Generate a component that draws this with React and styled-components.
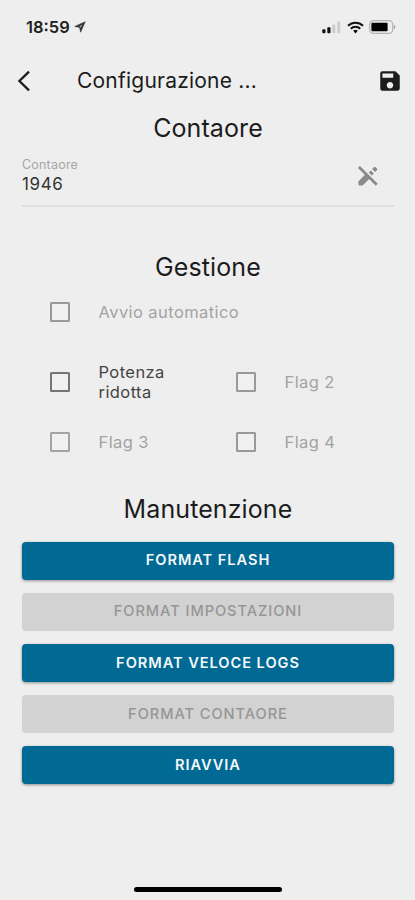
import React, { useState } from 'react'
import styled, { createGlobalStyle } from 'styled-components'
import { MdSave } from 'react-icons/md'

const actions = [
    { label: "FORMAT FLASH", enabled: true },
    { label: "FORMAT IMPOSTAZIONI", enabled: false },
    { label: "FORMAT VELOCE LOGS", enabled: true },
    { label: "FORMAT CONTAORE", enabled: false },
    { label: "RIAVVIA", enabled: true },
];

function StatusBar() {
    return (
        <StatusContainer>
            <Clock>18:59</Clock>
            <svg width="12" height="12" viewBox="0 0 12 12">
                <path d="M11.2 0.8 L0.8 5.4 L5.6 6.4 L6.6 11.2 Z" fill="#333" stroke="#333" strokeWidth="0.6" strokeLinejoin="round" />
                <path d="M5.4 5.4 L8.6 3.4 L6.6 6.6 Z" fill="#bbb" />
            </svg>
            <StatusIcons>
                <svg width="19" height="13" viewBox="0 0 19 13">
                    <rect x="0.3" y="8.2" width="3.2" height="4" rx="1" fill="#111" />
                    <rect x="5.3" y="6.2" width="3.2" height="6" rx="1" fill="#111" />
                    <rect x="10.3" y="3.4" width="3" height="8.8" rx="1" fill="#ccc" />
                    <rect x="15.2" y="0.6" width="3" height="11.6" rx="1" fill="#ccc" />
                </svg>
                <svg width="17" height="13" viewBox="0 0 17 13" fill="none" stroke="#111" strokeWidth="2.1">
                    <path d="M1 4.8 A10.6 10.6 0 0 1 16 4.8" />
                    <path d="M3.8 7.7 A6.7 6.7 0 0 1 13.2 7.7" />
                    <path d="M6.2 9.8 A3.4 3.4 0 0 1 10.8 9.8 L8.5 12.4 Z" fill="#111" stroke="none" />
                </svg>
                <svg width="27" height="14" viewBox="0 0 27 14">
                    <rect x="0.7" y="0.7" width="23" height="12.6" rx="3.8" fill="none" stroke="#b4b4b4" strokeWidth="1.3" />
                    <rect x="2.4" y="2.8" width="16.2" height="8.4" rx="1" fill="#000" />
                    <path d="M25 4.8 A2.6 2.6 0 0 1 25 9.2 Z" fill="#999" />
                </svg>
            </StatusIcons>
        </StatusContainer>
    )
};

function CheckItem({ label, disabled, faded }) {
    const [checked, setChecked] = useState(false);

    return (
        <CheckLabel $disabled={disabled}>
            <CheckBox
                type="checkbox"
                checked={checked}
                disabled={disabled}
                $faded={faded}
                onChange={() => setChecked(!checked)}
            />
            <span>{label}</span>
        </CheckLabel>
    )
};

function App() {
    return (
        <>
        <GlobalStyle />
        <Screen>
            <StatusBar />

            <Header>
                <IconButton aria-label="Indietro">
                    <svg width="14" height="22" viewBox="0 0 14 22">
                        <path d="M12 1.6 L2.4 11 L12 20.4" fill="none" stroke="#1c1c1c" strokeWidth="2.3" />
                    </svg>
                </IconButton>
                <Title>Configurazione ...</Title>
                <IconButton aria-label="Salva">
                    <MdSave size={26} color="#1c1c1c" />
                </IconButton>
            </Header>

            <SectionTitle>Contaore</SectionTitle>
            <Field>
                <div>
                    <FieldLabel>Contaore</FieldLabel>
                    <FieldValue>1946</FieldValue>
                </div>
                <svg width="20" height="20" viewBox="0 0 20 20" fill="#8a8a8a">
                    <path d="M0.4 15.6 L8 7.4 L12.4 11.8 L4.6 19.6 H2 Q0.4 19.6 0.4 18 Z" />
                    <path d="M10.8 6.4 L12.8 4.4 L15.8 7.4 L13.8 9.4 Z" />
                    <path d="M14.1 3.1 L15.9 1.3 Q16.8 0.4 17.7 1.3 L18.9 2.5 Q19.8 3.4 18.9 4.3 L17.1 6.1 Z" />
                    <path d="M0.9 0.9 L18.8 18.8" stroke="#8a8a8a" strokeWidth="2.7" />
                </svg>
            </Field>

            <SectionTitle>Gestione</SectionTitle>
            <CheckRow>
                <CheckItem label="Avvio automatico" disabled />
            </CheckRow>
            <CheckGrid>
                <CheckItem label="Potenza ridotta" />
                <CheckItem label="Flag 2" disabled />
                <CheckItem label="Flag 3" disabled faded />
                <CheckItem label="Flag 4" disabled />
            </CheckGrid>

            <SectionTitle>Manutenzione</SectionTitle>
            <ButtonList>
                {actions.map((action) => (
                    <ActionButton key={action.label} disabled={!action.enabled}>{action.label}</ActionButton>
                ))}
            </ButtonList>

            <HomeIndicator />
        </Screen>
        </>
  )
};

const GlobalStyle = createGlobalStyle`
    * {
        box-sizing: border-box;
    }

    body {
        margin: 0;
        background: #eeeeee;
    }
`

const Screen = styled.div`
    display: flex;
    flex-direction: column;
    width: 415px;
    height: 900px;
    padding: 0 21px 0 22px;
    background: #eeeeee;
    color: #1c1c1c;
    font-family: Inter, "Liberation Sans", sans-serif;
`

const StatusContainer = styled.div`
    display: flex;
    align-items: center;
    gap: 4px;
    height: 54px;
    padding-left: 4px;
`

const Clock = styled.span`
    font-size: 16.5px;
    font-weight: 600;
    color: #222;
`

const StatusIcons = styled.div`
    display: flex;
    align-items: center;
    gap: 5.5px;
    margin-left: auto;
    margin-right: -2px;
`

const Header = styled.header`
    display: flex;
    align-items: center;
    height: 53px;
    margin: 0 -9px 0 -5px;
`

const IconButton = styled.button`
    display: flex;
    padding: 0;
    border: none;
    background: none;
`

const Title = styled.h1`
    flex: 1;
    margin: 0 0 0 46px;
    font-size: 21px;
    font-weight: 400;
    letter-spacing: 0.22px;
`

const SectionTitle = styled.h2`
    height: 42px;
    margin: 0;
    line-height: 42px;
    text-align: center;
    font-size: 25px;
    font-weight: 400;
    letter-spacing: 0.1px;
`

const Field = styled.div`
    display: flex;
    justify-content: space-between;
    align-items: center;
    height: 58px;
    margin-bottom: 39px;
    padding: 0 16px 3px 0;
    border-bottom: 2px solid #dedede;
`

const FieldLabel = styled.div`
    line-height: 16px;
    font-size: 12.5px;
    letter-spacing: 0.2px;
    color: #a6a6a6;
`

const FieldValue = styled.div`
    line-height: 22px;
    font-size: 17px;
    letter-spacing: 0.6px;
    color: #333;
`

const CheckRow = styled.div`
    display: flex;
    height: 40px;
    padding-left: 28px;
    margin-top: 4px;
`

const CheckGrid = styled.div`
    display: grid;
    grid-template-columns: 186px 1fr;
    grid-template-rows: 60px 60px;
    margin-top: 20px;
    padding-left: 28px;
    margin-bottom: 16px;

    span {
        max-width: 90px;
    }
`

const CheckLabel = styled.label`
    display: flex;
    align-items: center;
    gap: 28.5px;
    line-height: 20px;
    font-size: 16.5px;
    letter-spacing: 0.42px;
    color: ${(props) => props.$disabled ? "#a3a3a3" : "#444"};
`

const CheckBox = styled.input`
    appearance: none;
    flex: none;
    width: 20px;
    height: 20px;
    margin: 0;
    border: 2px solid ${(props) => props.disabled ? (props.$faded ? "#a4a4a4" : "#999") : "#747474"};
    border-radius: 1.5px;
    background: #f0f0f0;

    &:checked {
        background: #006994;
    }
`

const ButtonList = styled.div`
    display: flex;
    flex-direction: column;
    gap: 13.2px;
    margin-top: 11.5px;
`

const ActionButton = styled.button`
    height: 38px;
    padding: 0 0 0.5px;
    border: none;
    border-radius: 4px;
    background: #006994;
    box-shadow: 0 1px 3px rgba(0, 0, 0, 0.4);
    color: #f4f8fa;
    font-family: inherit;
    font-size: 14.6px;
    font-weight: 600;
    letter-spacing: 0.95px;

    &:disabled {
        background: #d2d2d2;
        box-shadow: none;
        color: #969696;
        font-weight: 500;
    }
`

const HomeIndicator = styled.div`
    width: 148px;
    height: 5px;
    margin: auto auto 8px 112px;
    border-radius: 3px;
    background: #000;
`

export default App;
